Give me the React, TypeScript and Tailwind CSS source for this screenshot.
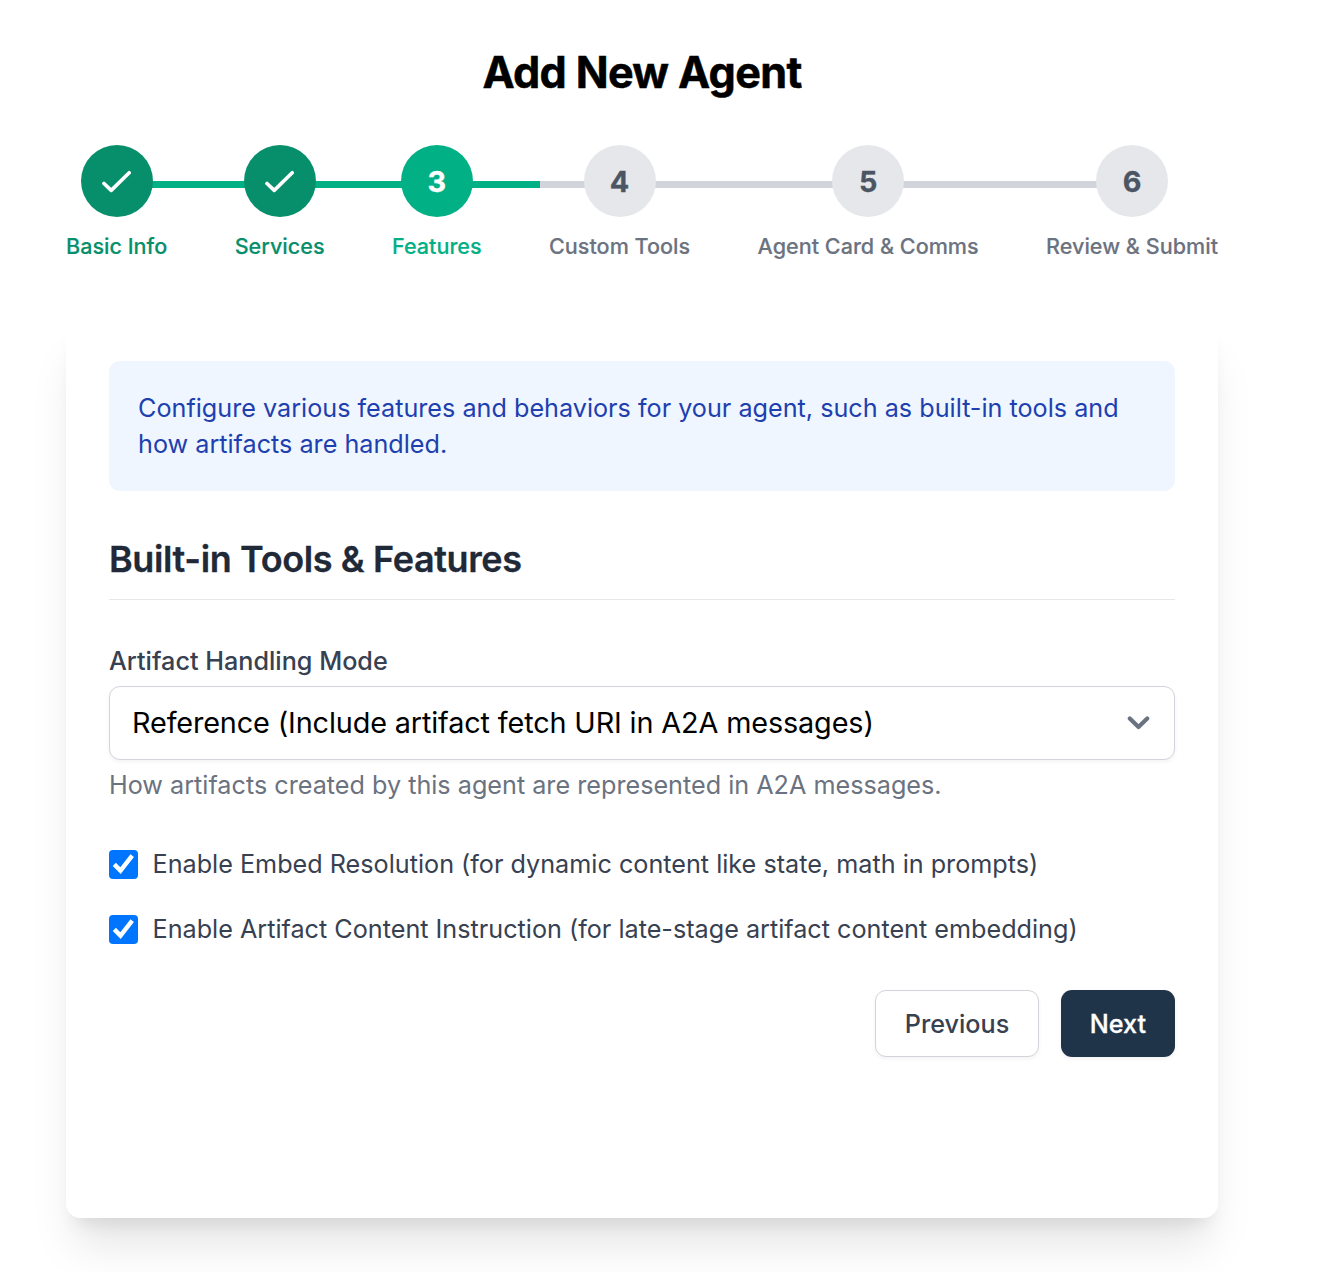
import { ReactNode } from "react";

type Step = { label: string; state: "done" | "active" | "todo" };

const steps: Step[] = [
  { label: "Basic Info", state: "done" },
  { label: "Services", state: "done" },
  { label: "Features", state: "active" },
  { label: "Custom Tools", state: "todo" },
  { label: "Agent Card & Comms", state: "todo" },
  { label: "Review & Submit", state: "todo" },
];

const circleStyles = {
  done: "bg-[#078f6b] text-white",
  active: "bg-[#02b086] text-white",
  todo: "bg-[#e5e7eb] text-[#4b5563]",
};

const labelStyles = {
  done: "text-[#078f6b]",
  active: "text-[#02b086]",
  todo: "text-[#6b7280]",
};

function Stepper() {
  return (
    <div className="relative mt-[38px] flex justify-between">
      <div className="absolute left-[51px] right-[86px] top-[36px] h-[7px] bg-[#d1d5db]">
        <div className="h-full w-[423px] bg-[#02b086]" />
      </div>
      {steps.map((step, i) => (
        <div key={step.label} className="relative flex flex-col items-center">
          <div
            className={`flex size-[72px] items-center justify-center rounded-full text-[28.8px] font-bold ${circleStyles[step.state]}`}
          >
            {step.state === "done" ? (
              <svg
                className="h-[24px] w-[30px]"
                viewBox="0 0 30 24"
                fill="none"
                stroke="currentColor"
                strokeWidth="3.6"
                strokeLinecap="round"
                strokeLinejoin="round"
              >
                <path d="M2 14.5 9.2 21.4 27.2 3.7" />
              </svg>
            ) : (
              <span className="pt-[2px] [-webkit-text-stroke:0.3px_currentColor]">{i + 1}</span>
            )}
          </div>
          <div
            className={`mt-[15px] whitespace-nowrap text-[21.6px] font-medium leading-[29px] [-webkit-text-stroke:0.15px_currentColor] ${labelStyles[step.state]}`}
          >
            {step.label}
          </div>
        </div>
      ))}
    </div>
  );
}

function CheckRow({ children }: { children: ReactNode }) {
  return (
    <label className="flex h-[36px] items-center text-[25.2px] text-[#374151]">
      <span className="mr-[14.5px] flex size-[29px] items-center justify-center rounded-[4px] bg-[#0075ff]">
        <svg className="size-[29px]" viewBox="0 0 29 29" fill="none" stroke="white" strokeWidth="4.4">
          <path d="M5.3 14.4 11.5 20.6 23.2 5.6" />
        </svg>
      </span>
      <span className="pt-[2px]">{children}</span>
    </label>
  );
}

export default function App() {
  return (
    <div className="h-[1272px] overflow-hidden bg-white pl-[66px] pt-[43px] font-['Inter',sans-serif]">
      <div className="w-[1152px]">
        <h1 className="h-[64px] text-center text-[43.2px] font-bold leading-[58px] tracking-[-0.68px] text-black [-webkit-text-stroke:0.5px_currentColor]">
          Add New Agent
        </h1>
        <Stepper />
        <main className="mt-[57px] h-[900px] rounded-[14.4px] bg-white px-[43px] pt-[43px] shadow-[0_36px_45px_-9px_rgba(0,0,0,0.1),0_14.4px_18px_-10.8px_rgba(0,0,0,0.1)]">
          <p className="h-[130px] rounded-[11px] bg-[#eff6ff] px-[29px] pt-[29px] text-[25.2px] leading-[36px] text-[#1e40af]">
            Configure various features and behaviors for your agent, such as built-in tools and how artifacts are
            handled.
          </p>
          <h2 className="mt-[43px] h-[66px] border-b border-[#e5e7eb] text-[36px] font-semibold leading-[50px] tracking-[-0.38px] text-[#1f2937] [-webkit-text-stroke:0.3px_currentColor]">
            Built-in Tools &amp; Features
          </h2>
          <div className="mt-[43px] text-[25.2px] font-medium leading-[36px] text-[#374151]">Artifact Handling Mode</div>
          <div className="mt-[7px] flex h-[74px] items-center justify-between rounded-[11px] border border-[#d1d5db] bg-white pl-[22px] pr-[24px] text-[28.8px] tracking-[-0.13px] text-black shadow-[0_2px_4px_rgba(0,0,0,0.05)]">
            Reference (Include artifact fetch URI in A2A messages)
            <svg
              className="h-[14px] w-[23px]"
              viewBox="0 0 23 14"
              fill="none"
              stroke="#6b7280"
              strokeWidth="4.2"
              strokeLinecap="round"
              strokeLinejoin="round"
            >
              <path d="M2.8 2.5 11.5 11 20.2 2.5" />
            </svg>
          </div>
          <p className="mt-[7px] text-[25.2px] leading-[36px] text-[#6b7280]">
            How artifacts created by this agent are represented in A2A messages.
          </p>
          <div className="mt-[43px] flex flex-col gap-[29px]">
            <CheckRow>Enable Embed Resolution (for dynamic content like state, math in prompts)</CheckRow>
            <CheckRow>Enable Artifact Content Instruction (for late-stage artifact content embedding)</CheckRow>
          </div>
          <div className="mt-[43px] flex justify-end gap-[22px] text-[25.2px] font-medium">
            <button className="h-[67px] w-[164px] rounded-[11px] border border-[#d1d5db] bg-white pt-[2px] text-[#374151] shadow-[0_2px_4px_rgba(0,0,0,0.05)]">
              Previous
            </button>
            <button className="h-[67px] w-[114px] rounded-[11px] bg-[#203449] pt-[2px] text-white shadow-[0_2px_4px_rgba(0,0,0,0.05)] [-webkit-text-stroke:0.3px_currentColor]">
              Next
            </button>
          </div>
        </main>
      </div>
    </div>
  );
}
